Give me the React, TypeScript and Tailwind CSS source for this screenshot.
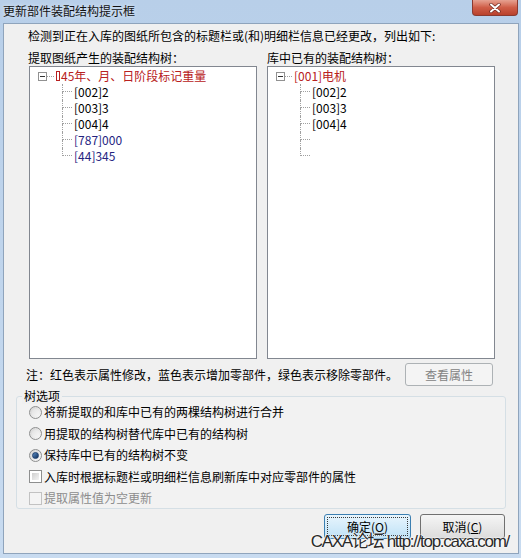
import React from "react";

type Item = { text: string; color?: string };

const RED = "text-[#b82020]";
const BLUE = "text-[#24247f]";

function TreeBox({ root, items }: { root: React.ReactNode; items: Item[] }) {
  return (
    <div className="h-[293px] border border-[#828790] bg-white pt-[1px]">
      <div className="flex items-center h-[16px]">
        <div className="ml-[8px] w-[9px] h-[9px] border border-[#919191] bg-white flex items-center justify-center">
          <div className="w-[5px] h-px bg-[#333333]" />
        </div>
        <div className="w-[7px] border-t border-dotted border-[#a0a0a0]" />
        <span className="ml-[2px] whitespace-nowrap">{root}</span>
      </div>
      {items.map((it, i) => (
        <div key={i} className="flex h-[16px]">
          <div className="ml-[32px] w-[10px] flex flex-col">
            <div className="h-[8px] border-l border-b border-dotted border-[#a0a0a0]" />
            <div
              className={
                i < items.length - 1
                  ? "h-[8px] border-l border-dotted border-[#a0a0a0]"
                  : "h-[8px]"
              }
            />
          </div>
          <span className={"ml-[2px] whitespace-nowrap " + (it.color ?? "text-black")}>{it.text}</span>
        </div>
      ))}
    </div>
  );
}

function Radio({ checked }: { checked?: boolean }) {
  return (
    <span className="w-[13px] h-[13px] shrink-0 rounded-full border border-[#8e8f8f] bg-linear-to-br from-[#d4d4d4] to-[#fafafa] flex items-center justify-center">
      {checked ? (
        <span className="w-[7px] h-[7px] rounded-full bg-linear-to-br from-[#5d8fc6] to-[#0f2f5c] border border-[#1d3f6e]" />
      ) : (
        <span className="w-[7px] h-[7px] rounded-full bg-linear-to-br from-[#e2e2e2] to-[#f6f6f6]" />
      )}
    </span>
  );
}

function Check({ disabled }: { disabled?: boolean }) {
  return disabled ? (
    <span className="w-[13px] h-[13px] shrink-0 border border-[#c2c2c2] bg-[#f4f4f4]" />
  ) : (
    <span className="w-[13px] h-[13px] shrink-0 border border-[#8e8f8f] bg-white p-[2px] flex">
      <span className="flex-1 bg-linear-to-br from-[#cfcfcf] to-[#f4f4f4]" />
    </span>
  );
}

export default function App() {
  return (
    <div className="w-[521px] h-[558px] flex flex-col bg-linear-to-b from-[#b8cfe9] to-[#c8dbf0] font-['Noto_Sans_CJK_SC','Noto_Sans',sans-serif] text-[12px] leading-[16px] text-black overflow-hidden">
      {/* title bar */}
      <div className="h-[23px] flex items-start justify-between shrink-0">
        <span className="ml-[3px] mt-[3px] text-[#111111] [text-shadow:0_0_4px_#e8f0fa]">更新部件装配结构提示框</span>
        <div className="mr-[3px] w-[46px] h-[16px] rounded-b-[4px] border border-t-0 border-[#8a3a30] bg-linear-to-b from-[#e6a191] via-[#cf5d47] to-[#b9412c] flex items-center justify-center">
          <svg width="12" height="10" viewBox="0 0 12 10">
            <path d="M2 1.5 L10 8.5 M10 1.5 L2 8.5" stroke="#6e2a22" strokeWidth="3.4" strokeLinecap="round" />
            <path d="M2 1.5 L10 8.5 M10 1.5 L2 8.5" stroke="#ffffff" strokeWidth="2" strokeLinecap="round" />
          </svg>
        </div>
      </div>

      {/* content */}
      <div className="ml-[3px] mr-[2px] mb-[4px] h-[531px] border border-[#8fa4bc] bg-[#f0f0f0] relative flex flex-col">
        <div className="pl-[24px] pt-[4px] whitespace-nowrap">
          检测到正在入库的图纸所包含的标题栏或(和)明细栏信息已经更改，列出如下:
        </div>

        <div className="mt-[6px] pl-[25px] grid grid-cols-[228px_228px] gap-x-[10px]">
          <div className="-ml-px whitespace-nowrap">提取图纸产生的装配结构树：</div>
          <div className="whitespace-nowrap">库中已有的装配结构树：</div>
          <TreeBox
            root={
              <span className={"flex items-center " + RED}>
                <span className="inline-block w-[4px] h-[10px] border border-[#b82020] mr-[1px]" />
                45年、月、日阶段标记重量
              </span>
            }
            items={[
              { text: "[002]2" },
              { text: "[003]3" },
              { text: "[004]4" },
              { text: "[787]000", color: BLUE },
              { text: "[44]345", color: BLUE },
            ]}
          />
          <TreeBox
            root={<span className={RED}>[001]电机</span>}
            items={[
              { text: "[002]2" },
              { text: "[003]3" },
              { text: "[004]4" },
              { text: "" },
              { text: "" },
            ]}
          />
        </div>

        <div className="mt-[4px] flex items-center justify-between pl-[22px] pr-[25px]">
          <span className="whitespace-nowrap">注：红色表示属性修改，蓝色表示增加零部件，绿色表示移除零部件。</span>
          <button className="w-[88px] h-[23px] rounded-[3px] border border-[#adb2b5] bg-[#f4f4f4] text-[#838383] text-[12px] leading-[16px]">
            查看属性
          </button>
        </div>

        <fieldset className="mt-[2px] ml-[12px] w-[490px] min-w-0 border border-[#d5dfe5] rounded-[3px] pb-[2px] bg-[#f2f2f2]">
          <legend className="ml-[5px] px-[2px] leading-[16px] bg-[#f0f0f0]">树选项</legend>
          <div className="flex flex-col gap-[5.5px] pl-[12px]">
            <label className="flex items-center h-[16px] gap-[2px] whitespace-nowrap">
              <Radio />
              <span>将新提取的和库中已有的两棵结构树进行合并</span>
            </label>
            <label className="flex items-center h-[16px] gap-[2px] whitespace-nowrap">
              <Radio />
              <span>用提取的结构树替代库中已有的结构树</span>
            </label>
            <label className="flex items-center h-[16px] gap-[2px] whitespace-nowrap">
              <Radio checked />
              <span>保持库中已有的结构树不变</span>
            </label>
            <label className="flex items-center h-[16px] gap-[2px] whitespace-nowrap">
              <Check />
              <span>入库时根据标题栏或明细栏信息刷新库中对应零部件的属性</span>
            </label>
            <label className="flex items-center h-[16px] gap-[2px] whitespace-nowrap text-[#8d8d8d]">
              <Check disabled />
              <span>提取属性值为空更新</span>
            </label>
          </div>
        </fieldset>

        <div className="mt-[5px] flex justify-end gap-[9px] pr-[13px]">
          <button className="w-[87px] h-[25px] rounded-[3px] border border-[#3c7fb1] bg-linear-to-b from-[#e8f5fd] to-[#bfe2f7] p-[2px] flex">
            <span className="flex-1 border border-dotted border-[#3a3a3a] flex items-center justify-center text-[12px] leading-[16px]">
              确定(<span className="underline">O</span>)
            </span>
          </button>
          <button className="w-[85px] h-[25px] rounded-[3px] border border-[#707070] bg-linear-to-b from-[#f5f5f5] to-[#dcdcdc] flex items-center justify-center text-[12px] leading-[16px]">
            取消(<span className="underline">C</span>)
          </button>
        </div>

        {/* watermark */}
        <div className="absolute right-[9px] bottom-[1px] font-['Liberation_Sans','Noto_Sans_CJK_SC',sans-serif] text-[17px] leading-[20px] tracking-[-1.3px] text-[#2a2a2a] whitespace-nowrap [text-shadow:0_0_2px_#ffffff,0_0_2px_#ffffff,0_0_1px_#ffffff]">
          CAXA论坛 http://top.caxa.com/
        </div>
      </div>
    </div>
  );
}
